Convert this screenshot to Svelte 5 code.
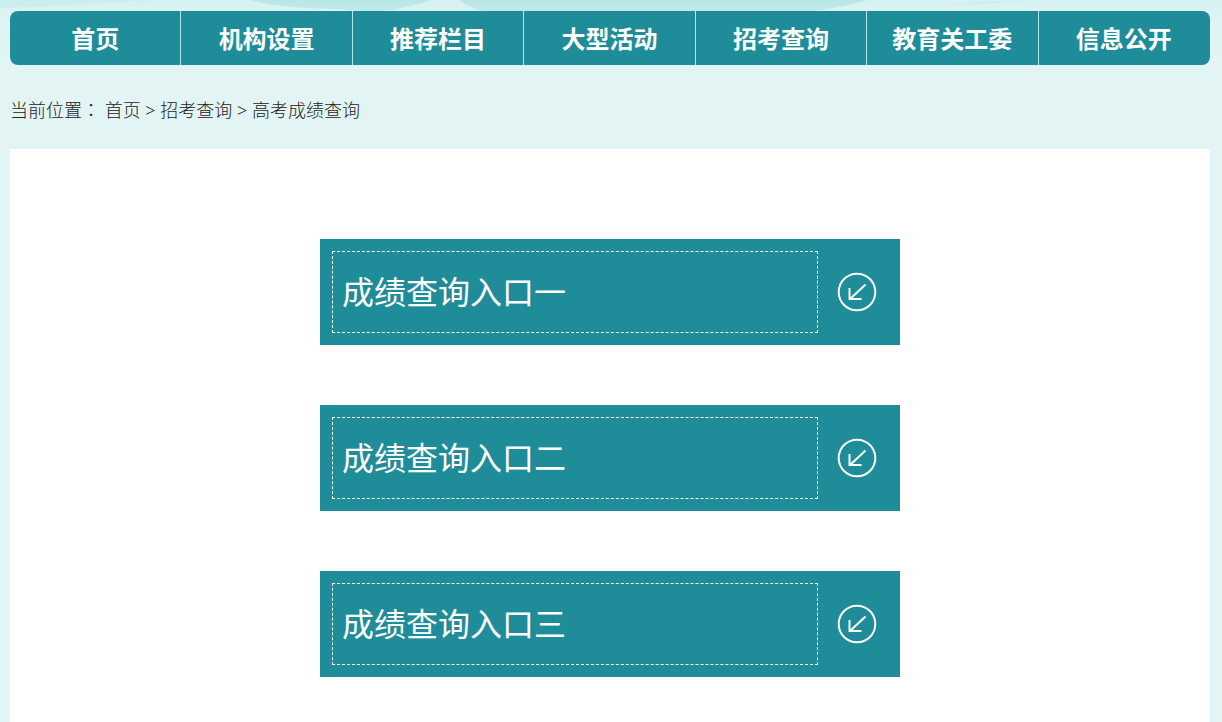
<script>
  const navLinks = ["首页", "机构设置", "推荐栏目", "大型活动", "招考查询", "教育关工委", "信息公开"];
  const entries = ["成绩查询入口一", "成绩查询入口二", "成绩查询入口三"];
</script>

<div class="page">
  <svg class="banner" viewBox="0 0 1222 60" preserveAspectRatio="none" aria-hidden="true">
    <defs>
      <linearGradient id="mist" x1="0" y1="0" x2="0" y2="1">
        <stop offset="0" stop-color="#d5f1f1" />
        <stop offset="0.3" stop-color="#def4f4" />
        <stop offset="1" stop-color="#e2f4f4" />
      </linearGradient>
      <linearGradient id="water" x1="0" y1="0" x2="0" y2="1">
        <stop offset="0" stop-color="#b9e6e7" />
        <stop offset="1" stop-color="#c3e9e9" />
      </linearGradient>
    </defs>
    <rect width="1222" height="60" fill="url(#mist)" />
    <path d="M0 0 H150 Q80 5 0 8 Z" fill="#cbedee" />
    <path d="M250 0 Q280 8 335 9 L375 12 H808 Q850 6 866 0 Z" fill="url(#water)" />
    <path d="M380 12 Q410 7 432 0 H459 Q470 8 486 12 Z" fill="#d8f1f1" />
    <path d="M940 6 Q980 5 1025 1 L985 1 Z" fill="#ceeeee" />
  </svg>

  <nav class="nav">
    {#each navLinks as link}
      <a href="/" class="nav-link">{link}</a>
    {/each}
  </nav>

  <div class="breadcrumb">
    <span>当前位置<span class="colon">：</span></span>
    <a href="/">首页</a> &gt; <a href="/">招考查询</a> &gt; <a href="/">高考成绩查询</a>
  </div>

  <main class="content">
    {#each entries as entry}
      <a href="/" class="entry">
        <span class="entry-title">{entry}</span>
        <svg class="entry-icon" viewBox="0 0 40 40" aria-hidden="true">
          <circle cx="20" cy="20" r="18.3" />
          <path d="M28.5 12.5 L13 27 M12.5 16 V27 H24.5" />
        </svg>
      </a>
    {/each}
  </main>
</div>

<style>
  :global(body) {
    margin: 0;
    background: #e2f4f4;
  }

  .page {
    position: relative;
    padding: 11px 12px 0 10px;
    font-family: "Noto Sans", "Noto Sans CJK SC", sans-serif;
    color: #222;
  }

  .banner {
    position: absolute;
    top: 0;
    left: 0;
    width: 100%;
    height: 60px;
  }

  .nav {
    position: relative;
    display: flex;
    border-radius: 8px;
    background: #1f8c99;
    overflow: hidden;
  }

  .nav-link {
    flex: 1;
    box-sizing: border-box;
    padding-top: 2px;
    border-right: 1px solid #b5e6e8;
    color: #fff;
    font-size: 24px;
    font-weight: 700;
    line-height: 52px;
    text-align: center;
    text-decoration: none;
  }

  .nav-link:last-child {
    border-right-color: transparent;
  }

  .breadcrumb {
    padding: 27px 0 21px;
    font-size: 18px;
    font-weight: 300;
    line-height: 36px;
  }

  .breadcrumb a {
    color: inherit;
    text-decoration: none;
  }

  /* the TC face centres the full-width colon in its cell */
  .colon {
    font-family: "Noto Sans CJK TC", sans-serif;
    line-height: 1;
  }

  .content {
    display: flex;
    flex-direction: column;
    align-items: center;
    gap: 60px;
    padding: 90px 20px;
    background: #fff;
  }

  .entry {
    display: flex;
    align-items: center;
    gap: 19px;
    box-sizing: border-box;
    width: 100%;
    max-width: 580px;
    padding: 12px 23px 12px 12px;
    background: #1f8c99;
    color: #fff;
    text-decoration: none;
  }

  .entry-title {
    flex: 1;
    padding: 0 9px;
    border: 1px dashed #fff;
    font-size: 32px;
    line-height: 80px;
  }

  .entry-icon {
    width: 40px;
    height: 40px;
    fill: none;
    stroke: #fff;
    stroke-width: 2;
  }
</style>
